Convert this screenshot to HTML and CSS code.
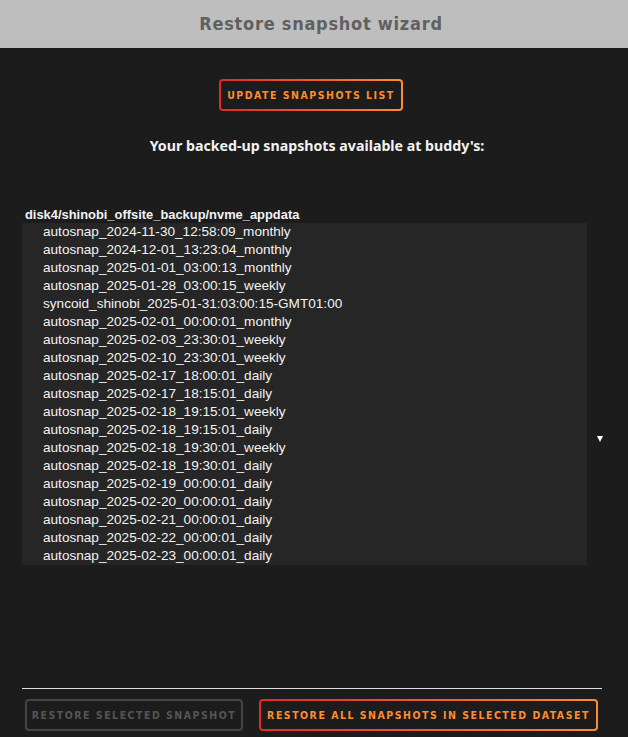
FILE: index.html
```html
<!DOCTYPE html>
<html lang="en">
<head>
  <meta charset="UTF-8" />
  <meta name="viewport" content="width=device-width, initial-scale=1.0"/>
  <title>Restore snapshot wizard</title>
  <link rel="stylesheet" href="styles.css">
</head>
<body>

  <header class="title">Restore snapshot wizard</header>

  <main class="wizard">
    <div class="update-row">
      <button class="btn btn-accent btn-update">Update snapshots list</button>
    </div>

    <p class="lead">Your backed-up snapshots available at buddy's:</p>

    <div class="picker">
      <div class="picker-list">
        <div class="group-label">disk4/shinobi_offsite_backup/nvme_appdata</div>
        <ul class="snaps">
          <li>autosnap_2024-11-30_12:58:09_monthly</li>
          <li>autosnap_2024-12-01_13:23:04_monthly</li>
          <li>autosnap_2025-01-01_03:00:13_monthly</li>
          <li>autosnap_2025-01-28_03:00:15_weekly</li>
          <li>syncoid_shinobi_2025-01-31:03:00:15-GMT01:00</li>
          <li>autosnap_2025-02-01_00:00:01_monthly</li>
          <li>autosnap_2025-02-03_23:30:01_weekly</li>
          <li>autosnap_2025-02-10_23:30:01_weekly</li>
          <li>autosnap_2025-02-17_18:00:01_daily</li>
          <li>autosnap_2025-02-17_18:15:01_daily</li>
          <li>autosnap_2025-02-18_19:15:01_weekly</li>
          <li>autosnap_2025-02-18_19:15:01_daily</li>
          <li>autosnap_2025-02-18_19:30:01_weekly</li>
          <li>autosnap_2025-02-18_19:30:01_daily</li>
          <li>autosnap_2025-02-19_00:00:01_daily</li>
          <li>autosnap_2025-02-20_00:00:01_daily</li>
          <li>autosnap_2025-02-21_00:00:01_daily</li>
          <li>autosnap_2025-02-22_00:00:01_daily</li>
          <li>autosnap_2025-02-23_00:00:01_daily</li>
        </ul>
      </div>
      <span class="picker-arrow"></span>
    </div>

    <hr class="divider">

    <div class="actions">
      <button class="btn btn-one" disabled>Restore selected snapshot</button>
      <button class="btn btn-accent btn-all">Restore all snapshots in selected dataset</button>
    </div>
  </main>

</body>
</html>
```

FILE: styles.css
```css
body {
  margin: 0;
  background-color: #1c1c1c;
  color: #f2f2f2;
  font-family: "Liberation Sans", Arial, sans-serif;
}
.title {
  height: 48px;
  line-height: 48px;
  padding-left: 14px;
  background: #bebebe;
  color: #606060;
  text-align: center;
  font-family: "DejaVu Sans Condensed", "DejaVu Sans", sans-serif;
  font-weight: bold;
  font-size: 18px;
  letter-spacing: 0.75px;
}
.wizard {
  padding: 31px 26px 0 22px;
}
.update-row {
  display: flex;
  justify-content: center;
  padding-right: 2px;
}
.btn {
  height: 32px;
  padding: 0;
  border: 2px solid #444;
  border-radius: 4px;
  background: #1c1c1c;
  color: #555;
  font-family: "DejaVu Sans Condensed", "DejaVu Sans", sans-serif;
  font-weight: bold;
  font-size: 10.5px;
  letter-spacing: 1.5px;
  text-transform: uppercase;
  white-space: nowrap;
  cursor: pointer;
}
.btn:disabled {
  cursor: default;
}
.btn-accent {
  border-color: transparent;
  background:
    linear-gradient(#1c1c1c, #1c1c1c) padding-box,
    linear-gradient(90deg, #e22828, #ff8c2f) border-box;
  color: #ff8c2f;
}
.btn-update {
  width: 184px;
}
.btn-one {
  width: 218px;
}
.btn-all {
  width: 339px;
}
.lead {
  margin: 25px 0 0;
  padding-left: 10px;
  line-height: 20px;
  text-align: center;
  font-family: "Noto Sans", sans-serif;
  font-weight: bold;
  font-size: 14.2px;
}
.picker {
  display: flex;
  align-items: center;
  height: 466px;
  margin-top: 50px;
}
.picker-list {
  align-self: flex-start;
  flex: 0 0 565px;
}
.group-label {
  height: 17px;
  line-height: 17px;
  padding-left: 3px;
  font-weight: bold;
  font-size: 12.9px;
}
.snaps {
  list-style: none;
  margin: 0;
  padding: 0;
  background: #262626;
}
.snaps li {
  line-height: 18px;
  padding-left: 21px;
  font-size: 13.6px;
}
.picker-arrow {
  margin-left: 10px;
  width: 0;
  height: 0;
  border-left: 3px solid transparent;
  border-right: 3px solid transparent;
  border-top: 6px solid #fff;
}
.divider {
  margin: 16px 0 0;
  border: none;
  border-top: 1px solid #ddd;
}
.actions {
  display: flex;
  gap: 16px;
  margin-top: 10px;
  padding-left: 3px;
}
```
